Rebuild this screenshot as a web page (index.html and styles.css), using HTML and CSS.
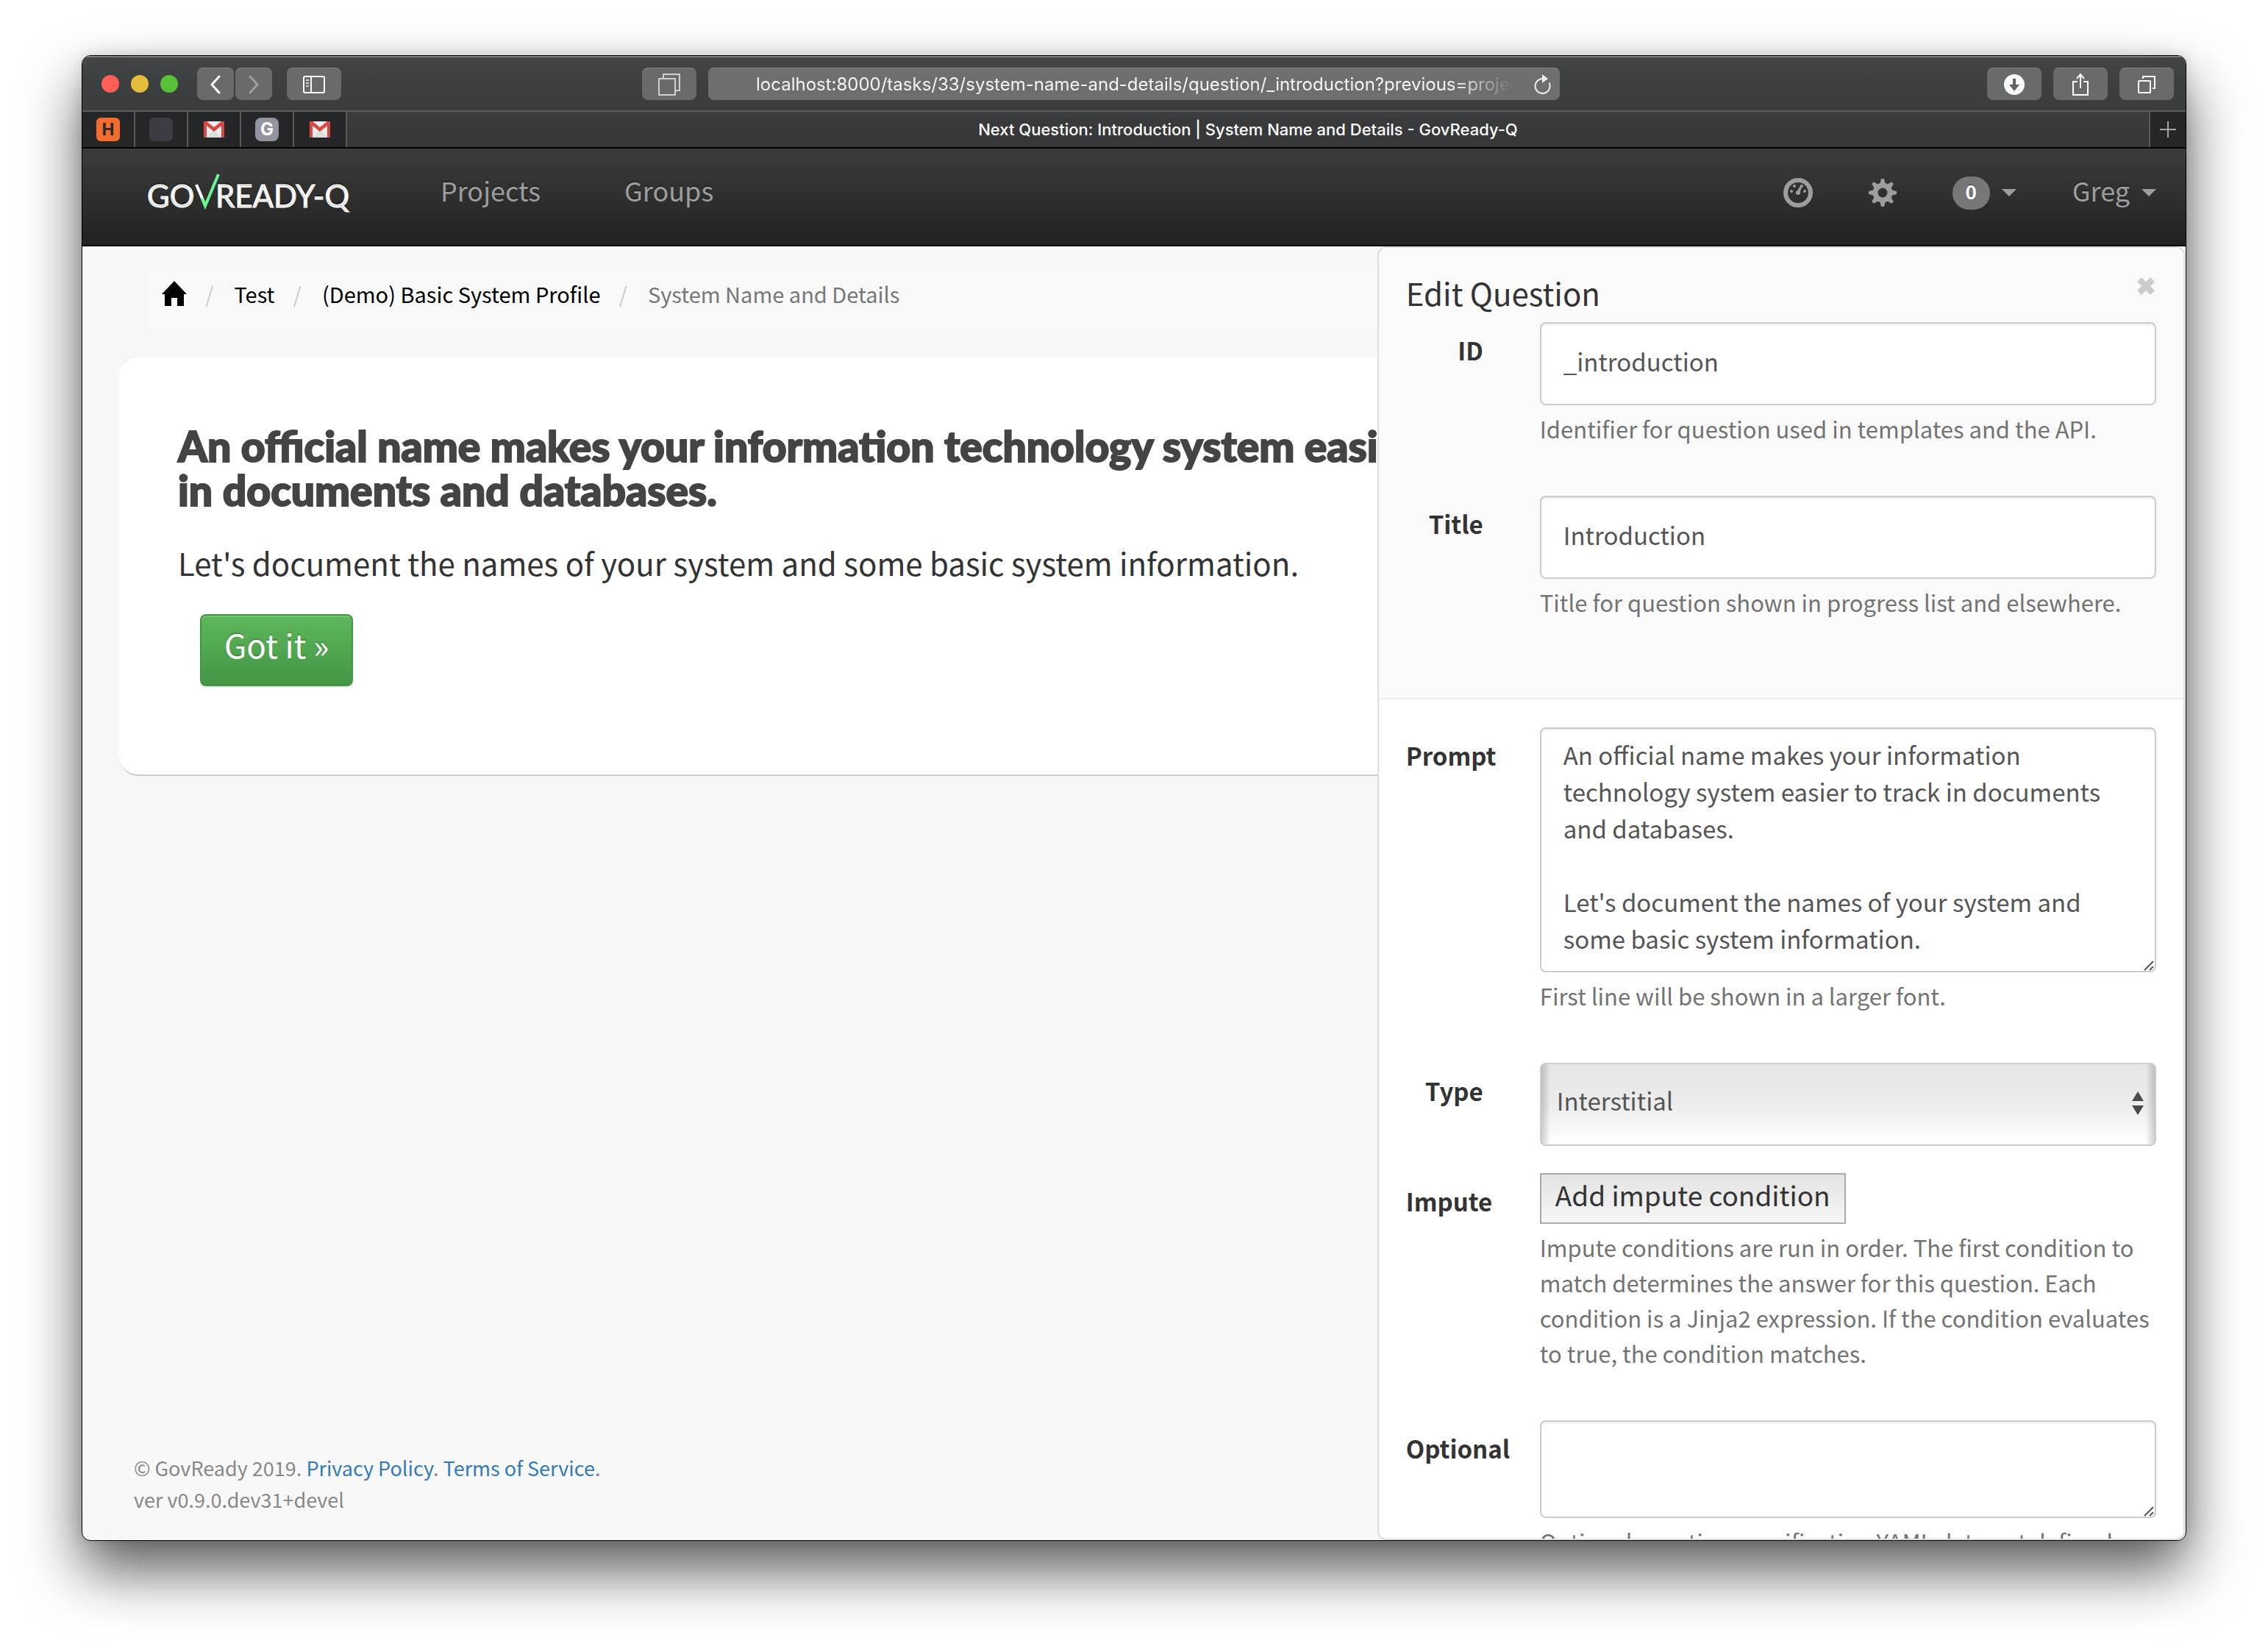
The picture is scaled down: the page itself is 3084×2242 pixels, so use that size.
FILE: index.html
```html
<!DOCTYPE html>
<html lang="en">
<head>
<meta charset="utf-8">
<title>Next Question: Introduction | System Name and Details - GovReady-Q</title>
<link rel="stylesheet" href="styles.css">
</head>
<body>
<div class="window">
  <div class="toolbar">
    <div class="lights"><span class="light light-red"></span><span class="light light-yellow"></span><span class="light light-green"></span></div>
    <div class="history">
      <button class="tool tool-small" type="button" aria-label="Back"><svg width="16" height="26" viewBox="0 0 16 26" fill="none" stroke="#fff" stroke-width="3" stroke-linecap="round" stroke-linejoin="round"><path d="M13 2 3 13l10 11"/></svg></button>
      <button class="tool tool-small" type="button" aria-label="Forward"><svg width="16" height="26" viewBox="0 0 16 26" fill="none" stroke="#9c9e9f" stroke-width="3" stroke-linecap="round" stroke-linejoin="round"><path d="M3 2l10 11L3 24"/></svg></button>
    </div>
    <button class="tool" type="button" aria-label="Sidebar"><svg width="30" height="24" viewBox="0 0 30 24" fill="none" stroke="#fff" stroke-width="2"><rect x="1" y="1" width="28" height="22" rx="2"/><path d="M11 1v22"/><path d="M4 6h4M4 10h4M4 14h4" stroke="#d0d2d2"/></svg></button>
    <span class="space-left"></span>
    <button class="tool" type="button" aria-label="Tab overview"><svg width="30" height="30" viewBox="0 0 30 30" fill="none" stroke="#cfd1d1" stroke-width="2"><rect x="1" y="7" width="22" height="22"/><path d="M7 7V1h22v22h-6"/></svg></button>
    <div class="address">
      <input class="address-input" type="text" aria-label="Address" value="localhost:8000/tasks/33/system-name-and-details/question/_introduction?previous=project">
      <button class="reload" type="button" aria-label="Reload"><svg width="24" height="28" viewBox="0 0 24 28"><path d="M13 6a10 10 0 1 0 8.500 5.500" fill="none" stroke="#eee" stroke-width="2"/><path d="M12 0l8 6-8 6z" fill="#eee"/></svg></button>
    </div>
    <span class="space-right"></span>
    <div class="tools-end">
      <button class="tool" type="button" aria-label="Downloads"><svg width="28" height="28" viewBox="0 0 28 28"><circle cx="14" cy="14" r="14" fill="#fff"/><path d="M12 6h4v8h5l-7 9-7-9h5z" fill="#5f6364"/></svg></button>
      <button class="tool" type="button" aria-label="Share"><svg width="24" height="32" viewBox="0 0 24 32" fill="none" stroke="#fff" stroke-width="2"><path d="M8 12H2v18h20V12h-6M12 21V2M7 8l5-6 5 6"/></svg></button>
      <button class="tool" type="button" aria-label="Show tabs"><svg width="26" height="26" viewBox="0 0 26 26" fill="none" stroke="#fff" stroke-width="2"><rect x="2" y="8" width="16" height="16" rx="1"/><path d="M8 5V2h16v16h-3"/></svg></button>
    </div>
  </div>

  <div class="tabs">
    <span class="pin"><span class="favicon favicon-h">H</span></span>
    <span class="pin"><span class="favicon favicon-blank"></span></span>
    <span class="pin"><svg width="28" height="22" viewBox="0 0 28 22"><rect width="28" height="22" rx="2" fill="#ececec"/><path d="M4 22 14 12l10 10z" fill="#dcdcdc"/><path d="M0 2a2 2 0 0 1 2-2h2l10 8 10-8h2a2 2 0 0 1 2 2v18a2 2 0 0 1-2 2h-2V6l-10 8L4 6v16H2a2 2 0 0 1-2-2z" fill="#d64840"/></svg></span>
    <span class="pin"><span class="favicon favicon-g">G</span></span>
    <span class="pin"><svg width="28" height="22" viewBox="0 0 28 22"><rect width="28" height="22" rx="2" fill="#ececec"/><path d="M4 22 14 12l10 10z" fill="#dcdcdc"/><path d="M0 2a2 2 0 0 1 2-2h2l10 8 10-8h2a2 2 0 0 1 2 2v18a2 2 0 0 1-2 2h-2V6l-10 8L4 6v16H2a2 2 0 0 1-2-2z" fill="#d64840"/></svg></span>
    <span class="tab-title">Next Question: Introduction | System Name and Details - GovReady-Q</span>
    <button class="new-tab" type="button" aria-label="New tab"><svg width="22" height="22" viewBox="0 0 22 22" stroke="#a5a6a6" stroke-width="2"><path d="M11 0v22M0 11h22"/></svg></button>
  </div>

  <nav class="navbar">
    <a class="brand" href="#" aria-label="GovReady-Q"><svg width="280" height="56" viewBox="0 0 280 56"><g class="brand-text"><text x="0" y="48">GO</text><text x="93" y="48">READY-Q</text></g><path d="M67 17l12 28" stroke="#fff" stroke-width="4" fill="none"/><path d="M75 36l4 10L97 3" stroke="#6bf590" stroke-width="4" fill="none"/></svg></a>
    <a class="nav-link" href="#">Projects</a>
    <a class="nav-link" href="#">Groups</a>
    <div class="nav-end">
      <a class="nav-icon" href="#" aria-label="Dashboard"><svg width="40" height="40" viewBox="0 0 40 40"><circle cx="20" cy="20" r="17" fill="none" stroke="#9d9d9d" stroke-width="6"/><g fill="#9d9d9d"><circle cx="20" cy="20" r="3"/><path d="M18 19l6-10 2 1-4 11z"/><circle cx="25" cy="11" r="2"/><circle cx="15" cy="11" r="2"/><circle cx="11" cy="18" r="2"/><circle cx="29" cy="18" r="2"/></g></svg></a>
      <a class="nav-icon" href="#" aria-label="Settings"><svg width="38" height="38" viewBox="0 0 38 38"><g fill="#9d9d9d"><path id="tooth" d="M15 8l2-8h4l2 8zM15 30l2 8h4l2-8z"/><use href="#tooth" transform="rotate(45 19 19)"/><use href="#tooth" transform="rotate(90 19 19)"/><use href="#tooth" transform="rotate(135 19 19)"/></g><circle cx="19" cy="19" r="10" fill="none" stroke="#9d9d9d" stroke-width="7"/></svg></a>
      <a class="nav-menu" href="#"><span class="badge">0</span><span class="caret"></span></a>
      <a class="nav-menu" href="#"><span class="nav-name">Greg</span><span class="caret"></span></a>
    </div>
  </nav>

  <div class="page">
    <main class="main">
      <ol class="breadcrumb">
        <li><a href="#" aria-label="Home"><svg class="home" width="34" height="34" viewBox="0 0 34 34"><path d="M17 0l17 18h-4v16h-9V23h-8v11H4V18H0z"/></svg></a></li>
        <li><a href="#">Test</a></li>
        <li><a href="#">(Demo) Basic System Profile</a></li>
        <li class="current">System Name and Details</li>
      </ol>
      <section class="card">
        <h1>An official name makes your information technology system easier to track in documents and databases.</h1>
        <p>Let's document the names of your system and some basic system information.</p>
        <button class="got-it" type="button">Got it »</button>
      </section>
      <footer class="footer">
        <div>© GovReady 2019. <a href="#">Privacy Policy</a>. <a href="#">Terms of Service</a>.</div>
        <div>ver v0.9.0.dev31+devel</div>
      </footer>
    </main>

    <form class="panel">
      <div class="panel-head">
        <div class="panel-title">
          <h2>Edit Question</h2>
          <button class="close" type="button" aria-label="Close"><svg width="24" height="24" viewBox="0 0 24 24"><path d="M6 0l6 6 6-6 6 6-6 6 6 6-6 6-6-6-6 6-6-6 6-6-6-6z" fill="#ccc"/></svg></button>
        </div>
        <div class="row">
          <label for="q-id">ID</label>
          <div><input class="field" id="q-id" type="text" value="_introduction"><p class="help">Identifier for question used in templates and the API.</p></div>
        </div>
        <div class="row">
          <label for="q-title">Title</label>
          <div><input class="field" id="q-title" type="text" value="Introduction"><p class="help">Title for question shown in progress list and elsewhere.</p></div>
        </div>
      </div>
      <div class="panel-body">
        <div class="row">
          <label for="q-prompt">Prompt</label>
          <div><textarea class="field area" id="q-prompt" rows="6">An official name makes your information technology system easier to track in documents and databases.

Let's document the names of your system and some basic system information.</textarea><p class="help">First line will be shown in a larger font.</p></div>
        </div>
        <div class="row">
          <label for="q-type">Type</label>
          <div class="select-wrap"><select class="field select" id="q-type"><option>Interstitial</option></select><svg class="arrows" width="16" height="32" viewBox="0 0 16 32" fill="#4a4a4a"><path d="M8 0l8 13H0zM0 19h16L8 32z"/></svg></div>
        </div>
        <div class="row">
          <label for="q-impute">Impute</label>
          <div><button class="add" id="q-impute" type="button">Add impute condition</button><p class="help">Impute conditions are run in order. The first condition to match determines the answer for this question. Each condition is a Jinja2 expression. If the condition evaluates to true, the condition matches.</p></div>
        </div>
        <div class="row">
          <label for="q-optional">Optional</label>
          <div><textarea class="field area" id="q-optional" rows="2"></textarea><p class="help">Optional question specification YAML data not defined</p></div>
        </div>
      </div>
    </form>
  </div>
</div>
</body>
</html>
```
FILE: styles.css
```css
* { box-sizing: border-box; }

body {
  display: flex;
  height: 100vh;
  margin: 0;
  padding: 75px 111px 147px;
  background: #fff;
  color: #333;
  font-family: "Noto Sans CJK SC", "Open Sans", sans-serif;
}

a { color: inherit; text-decoration: none; }
button { font-family: inherit; cursor: pointer; }
svg { display: block; flex: none; }
h1, h2, p, ol { margin: 0; padding: 0; }

.window {
  display: flex;
  flex: 1;
  flex-direction: column;
  min-width: 0;
  overflow: hidden;
  border: 1px solid #000;
  border-radius: 12px;
  background: #f7f7f7;
  box-shadow: 0 40px 80px rgba(0, 0, 0, .65), 0 0 20px rgba(0, 0, 0, .12);
}

/* Browser toolbar */
.toolbar {
  display: flex;
  align-items: center;
  height: 76px;
  padding: 0 16px 0 26px;
  border-top: 2px solid #7c7f7f;
  border-bottom: 2px solid #5b5d5e;
  background: linear-gradient(#414546, #393b3c);
  font-family: Inter, sans-serif;
}
.lights { display: flex; gap: 16px; margin-right: 26px; }
.light { width: 24px; height: 24px; border-radius: 50%; }
.light-red { background: #ff5f57; }
.light-yellow { background: #e4bd3d; }
.light-green { background: #57c038; }
.history { display: flex; gap: 2px; margin-right: 20px; }
.tool {
  display: flex;
  flex: none;
  align-items: center;
  justify-content: center;
  width: 74px;
  height: 44px;
  padding: 0;
  border: 0;
  border-top: 1px solid #858888;
  border-radius: 8px;
  background: #686b6c;
}
.tool-small { width: 50px; }
.space-left { flex: 409; }
.space-right { flex: 581; }
.address {
  display: flex;
  flex: 1081;
  align-items: center;
  height: 44px;
  margin-left: 16px;
  padding: 0 12px 0 65px;
  border-top: 1px solid #858688;
  border-radius: 8px;
  background: #6d6e70;
}
.address-input {
  flex: 1;
  min-width: 0;
  height: 40px;
  padding: 0;
  border: 0;
  background: none;
  color: #f4f4f4;
  font: 24px Inter, sans-serif;
  mask-image: linear-gradient(to left, transparent, #000 80px);
}
.reload { margin-left: 28px; padding: 0; border: 0; background: none; }
.tools-end { display: flex; gap: 16px; }

/* Tab strip */
.tabs {
  display: flex;
  height: 50px;
  border-bottom: 2px solid #000;
  background: linear-gradient(#3a3c3d, #343637);
  font-family: Inter, sans-serif;
}
.pin {
  display: flex;
  flex: none;
  align-items: center;
  justify-content: center;
  width: 72px;
  border-right: 2px solid #58595a;
  background: #242627;
}
.favicon {
  width: 32px;
  height: 32px;
  border-radius: 6px;
  font-size: 24px;
  font-weight: 700;
  line-height: 32px;
  text-align: center;
}
.favicon-h { background: #f26c2e; color: #26282a; font-family: Roboto, sans-serif; }
.favicon-blank { background: #3a3d42; }
.favicon-g { border-radius: 8px; background: #9394a2; color: #fff; }
.tab-title {
  flex: 1;
  overflow: hidden;
  color: #fff;
  font-size: 22px;
  font-weight: 500;
  line-height: 48px;
  text-align: center;
  white-space: nowrap;
}
.new-tab {
  display: flex;
  align-items: center;
  justify-content: center;
  width: 50px;
  padding: 0;
  border: 0;
  border-left: 2px solid #58595a;
  background: #242627;
}

/* Site navigation */
.navbar {
  display: flex;
  align-items: center;
  height: 133px;
  padding: 0 40px 11px 88px;
  border-bottom: 2px solid #080808;
  background: linear-gradient(#3c3c3c, #222);
  color: #9d9d9d;
  font-size: 36px;
  line-height: 40px;
  text-shadow: 0 -2px 0 rgba(0, 0, 0, .25);
}
.brand { margin-right: 119px; }
.brand svg { overflow: visible; }
.brand-text { fill: #fff; stroke: #fff; stroke-width: 1; font-family: Lato, sans-serif; font-size: 42px; }
.nav-link { margin-right: 114px; padding-bottom: 8px; }
.nav-end { display: flex; align-items: center; margin-left: auto; }
.nav-icon { margin-right: 76px; }
.nav-menu { display: flex; align-items: center; }
.nav-menu + .nav-menu { margin-left: 76px; }
.nav-name { padding-bottom: 8px; }
.badge {
  width: 51px;
  height: 45px;
  padding-bottom: 4px;
  border-radius: 22px;
  background: #777;
  color: #fff;
  font-size: 26px;
  font-weight: 700;
  text-align: center;
}
.caret {
  margin-left: 16px;
  border-top: 10px solid #9d9d9d;
  border-right: 10px solid transparent;
  border-left: 10px solid transparent;
}

/* Page content */
.page { position: relative; display: flex; flex: 1; min-height: 0; }
.main { display: flex; flex: 1; flex-direction: column; min-width: 0; padding: 27px 50px 14px; }
.breadcrumb {
  display: flex;
  height: 84px;
  margin-left: 38px;
  padding: 12px 20px;
  border-radius: 8px;
  background: #f9f9f9;
  color: #000;
  font-size: 29px;
  line-height: 50px;
  list-style: none;
}
.breadcrumb li { display: flex; }
.breadcrumb li + li::before { content: "/"; padding: 0 28px 0 25px; color: #ccc; }
.breadcrumb .current { color: #777; }
.home { margin-top: 8px; }
.card {
  margin-top: 40px;
  padding: 90px 80px 120px;
  border-bottom: 2px solid #ccc;
  border-radius: 26px;
  background: #fff;
}
.card h1 {
  max-width: 1900px;
  color: #444;
  font: 900 57px/60px Lato, sans-serif;
  -webkit-text-stroke: 2px #444;
}
.card p { margin-top: 39px; font-size: 42px; line-height: 60px; }
.got-it {
  height: 98px;
  margin: 40px 30px 0;
  padding: 0 31px 16px;
  border: 2px solid #419641;
  border-radius: 8px;
  background: linear-gradient(#5cb85c, #449544);
  box-shadow: inset 0 2px 0 rgba(255, 255, 255, .15), 0 2px 2px rgba(0, 0, 0, .08);
  color: #fff;
  font-size: 44px;
  line-height: 60px;
  text-shadow: 0 -2px 0 rgba(0, 0, 0, .2);
}
.footer {
  margin-top: auto;
  padding: 14px 20px 20px;
  background: #f8f8f8;
  color: #888;
  font-size: 27px;
  line-height: 43px;
}
.footer a { color: #337ab7; }

/* Question editor, over the page's right side */
.panel {
  position: absolute;
  top: 0;
  right: 1px;
  bottom: 0;
  width: 38.4%;
  overflow: hidden;
  border: 2px solid #ddd;
  border-radius: 12px;
  background: #fff;
}
.panel-head { padding: 37px 37px 76px; border-bottom: 2px solid #eee; background: #fafafa; }
.panel-body { padding: 38px 37px; }
.panel-title { display: flex; justify-content: space-between; margin-bottom: 16px; }
.panel-title h2 { font-size: 42px; font-weight: 400; line-height: 48px; }
.close { height: 30px; margin-right: 2px; padding: 0; border: 0; background: none; }
.row { display: grid; grid-template-columns: 105px 1fr; column-gap: 77px; }
.row + .row { margin-top: 37px; }
.row label {
  padding-top: 14px;
  font-size: 33px;
  font-weight: 700;
  line-height: 48px;
  text-align: right;
  white-space: nowrap;
}
.field {
  display: block;
  width: 100%;
  height: 113px;
  padding: 0 30px 8px;
  border: 2px solid #ccc;
  border-radius: 8px;
  background: #fff;
  box-shadow: inset 0 2px 2px rgba(0, 0, 0, .075);
  color: #555;
  font-family: inherit;
  font-size: 33px;
  line-height: 50px;
}
.area { height: auto; padding: 10px 30px 19px; resize: vertical; overflow: hidden; }
.area::-webkit-resizer {
  background: url("data:image/svg+xml,%3Csvg xmlns='http://www.w3.org/2000/svg' viewBox='0 0 15 15'%3E%3Cpath d='M1 14 13 2M8 14l5-5' stroke='%23555' stroke-width='2'/%3E%3C/svg%3E");
}
.select-wrap { position: relative; }
.select {
  padding: 0 21px 12px;
  appearance: none;
  background:
    linear-gradient(90deg, rgba(0, 0, 0, .18), transparent 12px, transparent calc(100% - 12px), rgba(0, 0, 0, .18)),
    linear-gradient(#e6e6e6, #ececec 50%, #fff);
  box-shadow: none;
}
.arrows { position: absolute; top: 39px; right: 17px; pointer-events: none; }
.help { margin: 8px 0 30px; color: #737373; font-size: 31px; line-height: 48px; }
.add {
  display: block;
  height: 69px;
  padding: 0 19px 12px;
  border: 2px solid #aaa;
  background: linear-gradient(#e3e3e3, #f6f6f6);
  color: #333;
  font-size: 37px;
  line-height: 50px;
}
```
